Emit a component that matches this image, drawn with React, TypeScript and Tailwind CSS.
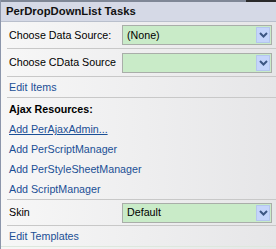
import React from 'react';

const font = { fontFamily: '"Liberation Sans", Arial, sans-serif' };

function Chevron() {
  return (
    <svg width="9" height="6" viewBox="0 0 9 6">
      <path d="M1 1 L4.5 4.5 L8 1" stroke="#3d5683" strokeWidth="2" fill="none" />
    </svg>
  );
}

function Select({ value }: { value?: string }) {
  return (
    <div className="flex h-[20px] w-[150px] shrink-0 items-center border border-[#a9aea9] bg-[#c9ebc8] pl-[4px] pr-[1px]">
      <span className="flex-1 text-[10.7px] leading-none text-black">{value}</span>
      <div className="flex h-[16px] w-[14px] items-center justify-center border border-[#b4c6ee] bg-[#c5d5fb]">
        <Chevron />
      </div>
    </div>
  );
}

function Sep() {
  return <div className="ml-[6px] h-px shrink-0 bg-[#c8c8c8]" />;
}

function LinkRow({ text, underline }: { text: string; underline?: boolean }) {
  return (
    <div className="flex h-[20px] shrink-0 items-center pl-[8px]">
      <span className={`whitespace-nowrap text-[10.7px] leading-[14px] text-[#1b4f95] ${underline ? 'underline' : ''}`}>{text}</span>
    </div>
  );
}

export default function App() {
  return (
    <div className="h-[249px] w-[276px] overflow-hidden bg-white" style={font}>
      <div className="flex h-full flex-col border-l border-[#8c96ab] bg-gradient-to-r from-[#f7f7f7] to-[#e6e6e8]">
        {/* header */}
        <div className="flex h-[2px] shrink-0">
          <div className="flex-1 bg-[#7f8796]" />
          <div className="w-[30px] bg-[#2a2a2a]" />
        </div>
        <div className="flex h-[20px] shrink-0 items-center border-b border-[#b9bfcc] bg-[#d5d9e6] pl-[5px]">
          <span className="whitespace-nowrap text-[11.3px] font-bold text-[#111]">PerDropDownList Tasks</span>
        </div>

        <div className="flex h-[26px] shrink-0 items-center justify-between pl-[8px] pr-[4px]">
          <span className="whitespace-nowrap text-[10.7px] text-black">Choose Data Source:</span>
          <Select value="(None)" />
        </div>
        <Sep />
        <div className="flex h-[27px] shrink-0 items-center justify-between pl-[8px] pr-[4px]">
          <span className="whitespace-nowrap text-[10.7px] text-black">Choose CData Source</span>
          <Select />
        </div>
        <Sep />
        <LinkRow text="Edit Items" />
        <Sep />

        <div className="flex h-[21px] shrink-0 items-center pl-[8px]">
          <span className="whitespace-nowrap text-[10.7px] font-bold leading-[14px] text-black">Ajax Resources:</span>
        </div>
        <LinkRow text="Add PerAjaxAdmin..." underline />
        <LinkRow text="Add PerScriptManager" />
        <LinkRow text="Add PerStyleSheetManager" />
        <LinkRow text="Add ScriptManager" />
        <Sep />
        <div className="flex h-[25px] shrink-0 items-center justify-between pl-[8px] pr-[4px]">
          <span className="text-[10.7px] text-black">Skin</span>
          <Select value="Default" />
        </div>
        <Sep />
        <LinkRow text="Edit Templates" />
        <div className="flex-1 border-t border-[#dde8dd]" />
      </div>
    </div>
  );
}
